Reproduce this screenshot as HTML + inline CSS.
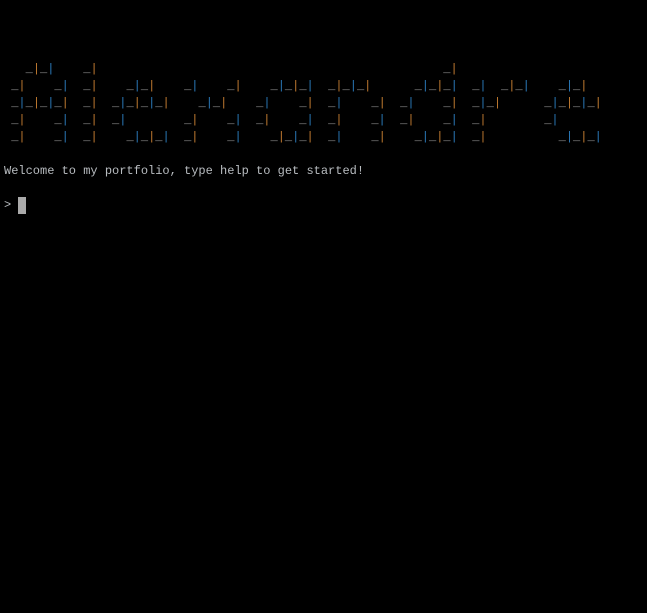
<!DOCTYPE html>
<html><head><meta charset="utf-8"><style>
html,body{margin:0;padding:0;background:#000;width:647px;height:613px;overflow:hidden}
pre{margin:0;position:absolute;left:4px;top:61px;font-family:"Liberation Mono",monospace;font-size:12px;line-height:17px;color:#9a9a9a}
b{font-weight:normal;color:#c07a30}
i{font-style:normal;color:#2a78b8}
.t{color:#b8bcc0}
.c{display:inline-block;width:8px;height:17px;background:#aaa;vertical-align:top}
</style></head><body>
<pre>   _<b>|</b>_<i>|</i>    _<b>|</b>                                                _<b>|</b>
 _<b>|</b>    _<i>|</i>  _<b>|</b>    _<i>|</i>_<b>|</b>    _<i>|</i>    _<b>|</b>    _<i>|</i>_<b>|</b>_<i>|</i>  _<b>|</b>_<i>|</i>_<b>|</b>      _<i>|</i>_<b>|</b>_<i>|</i>  _<i>|</i>  _<b>|</b>_<i>|</i>    _<i>|</i>_<b>|</b>
 _<i>|</i>_<b>|</b>_<i>|</i>_<b>|</b>  _<b>|</b>  _<i>|</i>_<b>|</b>_<i>|</i>_<b>|</b>    _<i>|</i>_<b>|</b>    _<i>|</i>    _<b>|</b>  _<i>|</i>    _<b>|</b>  _<i>|</i>    _<b>|</b>  _<i>|</i>_<b>|</b>      _<i>|</i>_<b>|</b>_<i>|</i>_<b>|</b>
 _<b>|</b>    _<i>|</i>  _<b>|</b>  _<i>|</i>        _<b>|</b>    _<i>|</i>  _<b>|</b>    _<i>|</i>  _<b>|</b>    _<i>|</i>  _<b>|</b>    _<i>|</i>  _<b>|</b>        _<i>|</i>
 _<b>|</b>    _<i>|</i>  _<b>|</b>    _<i>|</i>_<b>|</b>_<i>|</i>  _<b>|</b>    _<i>|</i>    _<b>|</b>_<i>|</i>_<b>|</b>  _<i>|</i>    _<b>|</b>    _<i>|</i>_<b>|</b>_<i>|</i>  _<b>|</b>          _<i>|</i>_<b>|</b>_<i>|</i>

<span class="t">Welcome to my portfolio, type help to get started!</span>

<span class="t">&gt; </span><span class="c"></span></pre>
</body></html>
